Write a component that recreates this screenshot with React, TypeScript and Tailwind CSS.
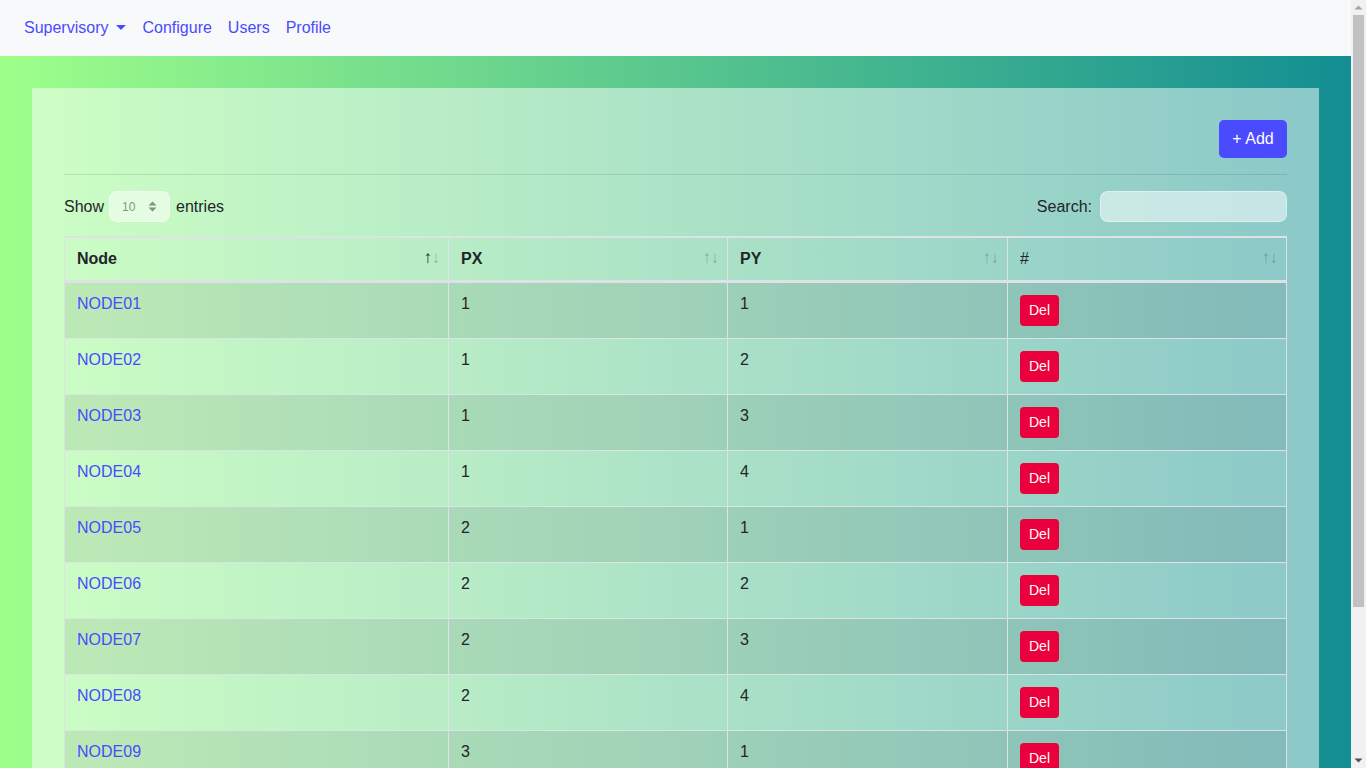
import React from "react";

const rows: [string, string, string][] = [
  ["NODE01", "1", "1"],
  ["NODE02", "1", "2"],
  ["NODE03", "1", "3"],
  ["NODE04", "1", "4"],
  ["NODE05", "2", "1"],
  ["NODE06", "2", "2"],
  ["NODE07", "2", "3"],
  ["NODE08", "2", "4"],
  ["NODE09", "3", "1"],
  ["NODE10", "3", "2"],
];

function SortArrows({ active }: { active?: boolean }) {
  return (
    <>
      <span
        className={`absolute right-[16px] top-[8px] leading-6 text-[17px] ${
          active ? "text-[#212529]" : "text-[#212529]/30"
        }`}
      >
        ↑
      </span>
      <span className="absolute right-[8px] top-[8px] leading-6 text-[17px] text-[#212529]/30">
        ↓
      </span>
    </>
  );
}

function FakeScrollbar() {
  return (
    <div className="fixed right-0 top-0 w-[15px] h-screen bg-[#f1f1f1] flex flex-col items-center">
      <svg width="15" height="15" viewBox="0 0 15 15" className="shrink-0">
        <path d="M3.5 9.5 L7.5 5.5 L11.5 9.5 Z" fill="#a3a3a3" />
      </svg>
      <div className="w-[11px] h-[592px] bg-[#c1c1c1]" />
      <div className="flex-1" />
      <svg width="15" height="15" viewBox="0 0 15 15" className="shrink-0">
        <path d="M3.5 5.5 L7.5 9.5 L11.5 5.5 Z" fill="#505050" />
      </svg>
    </div>
  );
}

export default function App() {
  return (
    <div className="w-[1351px] min-h-screen font-['Liberation_Sans',Arial,sans-serif] text-[16px] text-[#212529]">
      <nav className="h-14 bg-[#f8f9fa] flex items-center px-4">
        <a className="px-2 flex items-center text-[#4a4aff] leading-6">
          Supervisory
          <span className="ml-[8px] mt-[-1px] w-0 h-0 border-t-[5px] border-x-[5px] border-x-transparent border-t-[#4a4aff]" />
        </a>
        <a className="px-2 text-[#4a4aff] leading-6">Configure</a>
        <a className="px-2 text-[#4a4aff] leading-6">Users</a>
        <a className="px-2 text-[#4a4aff] leading-6">Profile</a>
      </nav>
      <main className="bg-[linear-gradient(90deg,#9eff8a,#138e92)] p-8">
        <div className="bg-white/50 p-8">
          <div className="flex justify-end">
            <button className="h-[38px] w-[68px] flex items-center justify-center rounded-[5px] bg-[#4a4aff] text-white leading-6">
              + Add
            </button>
          </div>
          <hr className="my-4 border-0 border-t border-black/10" />
          <div className="flex justify-between items-center h-[31px]">
            <div className="flex items-center">
              <span>Show</span>
              <div className="ml-[5px] mr-[6px] w-[61px] h-[31px] rounded-lg bg-white/50 border border-white/40 flex items-center justify-between pl-[12px] pr-[12px]">
                <span className="text-[12px] text-[#7f9a7d]">10</span>
                <svg width="9" height="11" viewBox="0 0 9 11">
                  <path d="M0.5 4.5 L4.5 0.5 L8.5 4.5 Z" fill="#809280" />
                  <path d="M0.5 6.5 L4.5 10.5 L8.5 6.5 Z" fill="#809280" />
                </svg>
              </div>
              <span>entries</span>
            </div>
            <div className="flex items-center">
              <span>Search:</span>
              <div className="ml-2 w-[187px] h-[31px] rounded-lg bg-white/50 border border-white/40" />
            </div>
          </div>
          <table className="mt-[14px] w-full table-fixed border-separate border-spacing-0 border-l border-t border-b border-[#dee2e6]">
            <thead>
              <tr>
                <th className="relative w-[384px] text-left font-bold px-3 pt-[9px] pb-[9px] leading-6 border-t border-r border-b-2 border-[#dee2e6]">
                  Node
                  <SortArrows active />
                </th>
                <th className="relative w-[279px] text-left font-bold px-3 pt-[9px] pb-[9px] leading-6 border-t border-r border-b-2 border-[#dee2e6]">
                  PX
                  <SortArrows />
                </th>
                <th className="relative w-[280px] text-left font-bold px-3 pt-[9px] pb-[9px] leading-6 border-t border-r border-b-2 border-[#dee2e6]">
                  PY
                  <SortArrows />
                </th>
                <th className="relative text-left font-normal px-3 pt-[9px] pb-[9px] leading-6 border-t border-r border-b-2 border-[#dee2e6]">
                  #
                  <SortArrows />
                </th>
              </tr>
            </thead>
            <tbody>
              {rows.map((r, i) => (
                <tr key={r[0]} className={i % 2 === 0 ? "bg-black/[0.075]" : ""}>
                  <td className="align-top px-3 pt-[9px] pb-3 leading-6 border-t border-r border-[#dee2e6]">
                    <a className="text-[#4a4aff]">{r[0]}</a>
                  </td>
                  <td className="align-top px-3 pt-[9px] pb-3 leading-6 border-t border-r border-[#dee2e6]">
                    {r[1]}
                  </td>
                  <td className="align-top px-3 pt-[9px] pb-3 leading-6 border-t border-r border-[#dee2e6]">
                    {r[2]}
                  </td>
                  <td className="align-top px-3 pt-[9px] pb-3 leading-6 border-t border-r border-[#dee2e6]">
                    <div className="mt-[3px] flex">
                      <button className="h-[31px] px-[9px] rounded-[4px] bg-[#e9003c] text-white text-[14px] leading-[21px]">
                        Del
                      </button>
                    </div>
                  </td>
                </tr>
              ))}
            </tbody>
          </table>
          <div className="mt-[8px] flex justify-between items-center h-[38px]">
            <div className="text-[16px]">Showing 1 to 10 of 12 entries</div>
            <div className="flex">
              <span className="px-3 h-[38px] leading-[36px] border border-[#dee2e6] rounded-l bg-white text-[#6c757d]">
                Previous
              </span>
              <span className="px-3 h-[38px] leading-[36px] border border-[#4a4aff] bg-[#4a4aff] text-white">
                1
              </span>
              <span className="px-3 h-[38px] leading-[36px] border border-[#dee2e6] bg-white text-[#4a4aff]">
                2
              </span>
              <span className="px-3 h-[38px] leading-[36px] border border-[#dee2e6] rounded-r bg-white text-[#4a4aff]">
                Next
              </span>
            </div>
          </div>
        </div>
      </main>
      <FakeScrollbar />
    </div>
  );
}
